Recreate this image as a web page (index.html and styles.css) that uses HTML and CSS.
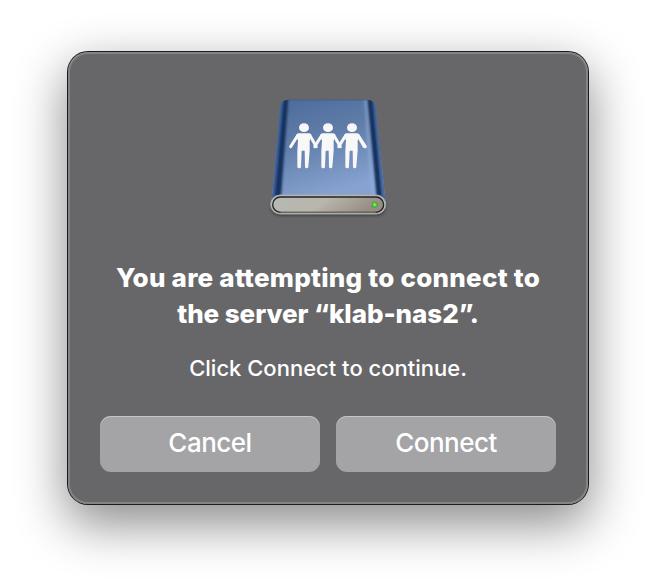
FILE: index.html
```html
<!DOCTYPE html>
<html lang="en">
<head>
<meta charset="utf-8">
<title>Connect to Server</title>
<link rel="stylesheet" href="styles.css">
</head>
<body>
<main class="dialog" role="alertdialog" aria-labelledby="title">
  <svg class="drive" viewBox="0 0 408 408" aria-hidden="true">
    <defs>
      <linearGradient id="face" x1="0" y1="0" x2=".35" y2="1">
        <stop offset="0" stop-color="#4c6a9a"/>
        <stop offset=".45" stop-color="#607da9"/>
        <stop offset="1" stop-color="#87a2d0"/>
      </linearGradient>
      <linearGradient id="front" x1="0" y1="0" x2="1" y2=".2">
        <stop offset="0" stop-color="#b5b9b4"/>
        <stop offset=".5" stop-color="#b9b6ac"/>
        <stop offset="1" stop-color="#958c82"/>
      </linearGradient>
      <radialGradient id="led">
        <stop offset="0" stop-color="#8dff66"/>
        <stop offset=".6" stop-color="#45dc32"/>
        <stop offset="1" stop-color="#359b2b"/>
      </radialGradient>
      <filter id="soft" x="-10%" y="-20%" width="120%" height="150%"><feGaussianBlur stdDeviation="4"/></filter>
      <filter id="band" x="-50%" y="-10%" width="200%" height="120%"><feGaussianBlur stdDeviation="3"/></filter>
      <clipPath id="body"><path d="M84 29H323Q342 30 347 48L376 330H35L61 48Q65 30 84 29Z"/></clipPath>
      <g id="person">
        <ellipse cx="0" cy="113" rx="15" ry="13" stroke="none"/>
        <path d="M-16 130H15L22 135L17 152V182L13 230Q13 235 8 235Q3 235 3 230L2 182H-7L-9 230Q-9 235-14 235Q-20 235-20 230L-20 182L-18 152L-24 135Z" stroke="none"/>
        <path d="M-18 135L-40 170M17 135L37 170" fill="none" stroke-width="9" stroke-linecap="round"/>
      </g>
    </defs>
    <rect x="32" y="322" width="346" height="56" rx="28" fill="#222" opacity=".55" filter="url(#soft)"/>
    <path d="M84 29H323Q342 30 347 48L376 330H35L61 48Q65 30 84 29Z" fill="url(#face)"/>
    <g clip-path="url(#body)">
      <g filter="url(#band)">
        <path d="M50 25H70L42 335H25Z" fill="#4063a0"/>
        <path d="M70 25H85L62 335H42Z" fill="#19335f"/>
        <path d="M322 25H338L369 335H351Z" fill="#19335f"/>
        <path d="M340 25H352L382 335H371Z" fill="#4063a0"/>
        <path d="M312 25H319L345 335H334Z" fill="#91aedd" opacity=".55"/>
      </g>
    </g>
    <path d="M84 30H323" stroke="#3e5986" stroke-width="2"/>
    <rect x="32" y="315" width="345" height="57" rx="28" fill="#bfc1bb" stroke="#a7aaa5" stroke-width="3"/>
    <rect x="38" y="321" width="333" height="46" rx="23" fill="url(#front)" stroke="#202326" stroke-width="4"/>
    <path d="M62 368H347" stroke="#777a74" stroke-width="3"/>
    <g fill="#f8f8f8" stroke="#f8f8f8">
      <use href="#person" x="132"/><use href="#person" x="204"/><use href="#person" x="276"/>
    </g>
    <path d="M294 136L316 170" stroke="#f8f8f8" stroke-width="9" stroke-linecap="round"/>
    <circle cx="344" cy="344" r="8.5" fill="url(#led)"/>
  </svg>
  <h1 class="title" id="title"><span class="line line-first">You are attempting to connect to</span><span class="line line-second">the server “klab-nas2”.</span></h1>
  <p class="message">Click Connect to continue.</p>
  <div class="actions">
    <button class="button cancel" type="button">Cancel</button>
    <button class="button connect" type="button">Connect</button>
  </div>
</main>
</body>
</html>
```
FILE: styles.css
```css
* { box-sizing: border-box; }

body {
  margin: 0;
  height: 588px;
  padding-top: 52px;
  overflow: hidden;
  background: #fff;
  font-family: Inter, "Liberation Sans", sans-serif;
  color: #fff;
}

.dialog {
  display: flex;
  flex-direction: column;
  align-items: center;
  width: 520px;
  height: 452px;
  margin: 0 auto;
  padding: 38px 32px 32px;
  border-radius: 20px;
  background: #676769;
  box-shadow:
    inset 0 0 0 2px #838483,
    0 0 0 1px #1b1b1b,
    0 18px 50px 2px rgba(0, 0, 0, .46);
}

.drive {
  display: block;
  width: 136px;
  height: 136px;
}

.title {
  margin: 34px 0 0;
  font-size: 26px;
  font-weight: 800;
  line-height: 36px;
  text-align: center;
  white-space: nowrap;
}

.line { display: block; }
.line-first { letter-spacing: .24px; }
.line-second { letter-spacing: -.06px; }

.message {
  margin: 22px 0 34px;
  font-size: 22px;
  font-weight: 500;
  line-height: 28px;
  letter-spacing: 0;
  white-space: nowrap;
}

.actions {
  display: grid;
  grid-template-columns: 220px 220px;
  gap: 16px;
}

.button {
  height: 56px;
  padding: 0 0 2px;
  border: 0;
  border-radius: 11px;
  background: #a4a4a6;
  box-shadow: inset 0 1px 0 #c5c5c6;
  font: 500 26px/36px Inter, "Liberation Sans", sans-serif;
  letter-spacing: -.5px;
  color: #fff;
}
```
